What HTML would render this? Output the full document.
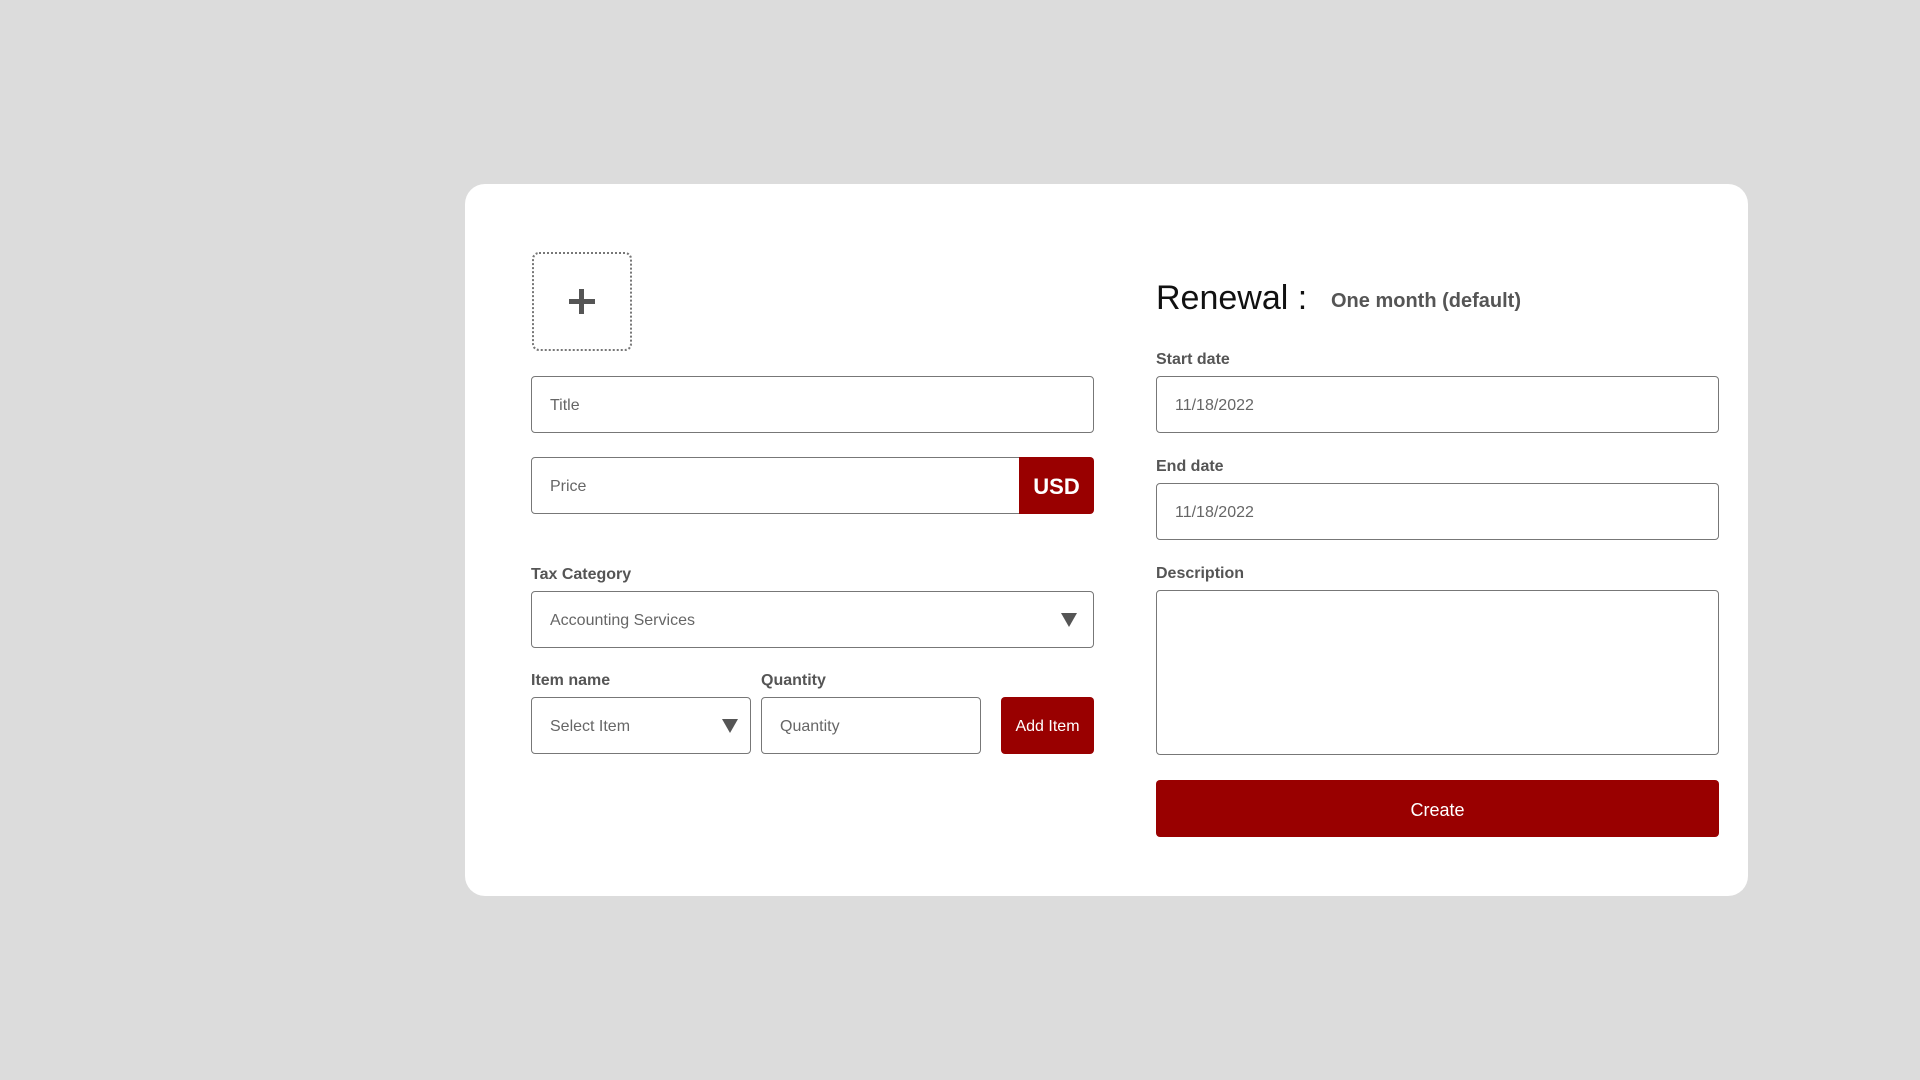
<!DOCTYPE html>
<html><head><meta charset="utf-8"><style>
*{box-sizing:border-box;margin:0;padding:0}
body{width:1920px;height:1080px;background:#dcdcdc;font-family:"Liberation Sans",sans-serif;position:relative;overflow:hidden}
.card{position:absolute;left:465px;top:184px;width:1283px;height:712px;background:#fff;border-radius:20px}
.a{position:absolute}
.inp{position:absolute;border:1.5px solid #777;border-radius:4px;background:#fff;font-size:16px;color:#666;padding-left:18px;padding-top:3px;display:flex;align-items:center}
.lbl{position:absolute;font-size:16px;color:#555;font-weight:bold}
.btn{position:absolute;background:#990000;color:#fff;border-radius:4px;display:flex;align-items:center;justify-content:center;padding-top:3px}
.tri{position:absolute;width:0;height:0;border-left:8px solid transparent;border-right:8px solid transparent;border-top:14px solid #555}
</style></head><body>
<div class="card"></div>
<div class="a" style="left:532px;top:252px;width:100px;height:99px;border:2px dotted #777;border-radius:7px"></div>
<div class="a" style="left:569px;top:299px;width:26px;height:5px;background:#555"></div>
<div class="a" style="left:579px;top:289px;width:5px;height:25px;background:#555"></div>

<div class="inp" style="left:531px;top:376px;width:563px;height:57px">Title</div>
<div class="inp" style="left:531px;top:457px;width:500px;height:57px;border-radius:4px 0 0 4px">Price</div>
<div class="btn" style="left:1019px;top:457px;width:75px;height:57px;border-radius:0 4px 4px 0;font-size:22px;font-weight:bold">USD</div>

<div class="lbl" style="left:531px;top:566px">Tax Category</div>
<div class="inp" style="left:531px;top:591px;width:563px;height:57px">Accounting Services</div>
<div class="tri" style="left:1061px;top:613px"></div>

<div class="lbl" style="left:531px;top:672px">Item name</div>
<div class="lbl" style="left:761px;top:672px">Quantity</div>
<div class="inp" style="left:531px;top:697px;width:220px;height:57px">Select Item</div>
<div class="tri" style="left:722px;top:719px"></div>
<div class="inp" style="left:761px;top:697px;width:220px;height:57px">Quantity</div>
<div class="btn" style="left:1001px;top:697px;width:93px;height:57px;font-size:16px">Add Item</div>

<div class="a" style="left:1156px;top:279px;font-size:34px;color:#111">Renewal :</div>
<div class="a" style="left:1331px;top:290px;font-size:20px;color:#555;font-weight:bold">One month (default)</div>
<div class="lbl" style="left:1156px;top:351px">Start date</div>
<div class="inp" style="left:1156px;top:376px;width:563px;height:57px">11/18/2022</div>
<div class="lbl" style="left:1156px;top:458px">End date</div>
<div class="inp" style="left:1156px;top:483px;width:563px;height:57px">11/18/2022</div>
<div class="lbl" style="left:1156px;top:565px">Description</div>
<div class="inp" style="left:1156px;top:590px;width:563px;height:165px"></div>
<div class="btn" style="left:1156px;top:780px;width:563px;height:57px;font-size:18px">Create</div>
</body></html>
